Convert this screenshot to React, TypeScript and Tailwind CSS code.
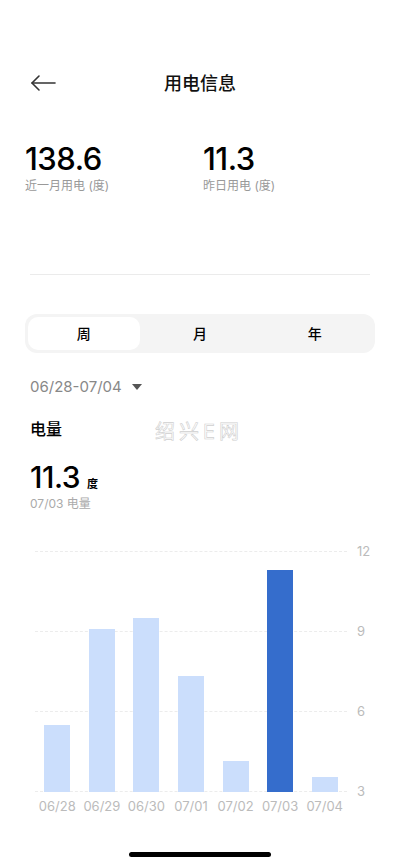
const bars = [
  { day: '06/28', value: 5.5 },
  { day: '06/29', value: 9.1 },
  { day: '06/30', value: 9.5 },
  { day: '07/01', value: 7.35 },
  { day: '07/02', value: 4.15 },
  { day: '07/03', value: 11.3, active: true },
  { day: '07/04', value: 3.55 },
]

const ticks = ['12', '9', '6', '3']

const BackArrow = () => (
  <svg width="26" height="18" viewBox="0 0 26 18" fill="none" stroke="#333" strokeWidth="1.6" strokeLinecap="round" strokeLinejoin="round">
    <path d="M25 9H2" />
    <path d="M9 2L2 9l7 7" />
  </svg>
)

const App = () => {
  return (
    <div className="w-[400px] h-[866px] bg-white flex flex-col font-['Inter','Noto_Sans_CJK_SC',sans-serif] text-black overflow-hidden">
      <header className="relative h-[44px] mt-[61px] flex items-center justify-center">
        <div className="absolute left-[30px] top-[13px]">
          <BackArrow />
        </div>
        <h1 className="text-[18px] font-medium text-[#111]">用电信息</h1>
      </header>

      <section className="flex px-[25px] mt-[37px]">
        <div className="w-[178px]">
          <p className="text-[31px] leading-[34px] font-medium tracking-[-0.5px]">138.6</p>
          <p className="text-[12px] text-[#999] mt-[1px]">近一月用电 (度)</p>
        </div>
        <div>
          <p className="text-[31px] leading-[34px] font-medium tracking-[-0.5px]">11.3</p>
          <p className="text-[12px] text-[#999] mt-[1px]">昨日用电 (度)</p>
        </div>
      </section>

      <div className="mx-[30px] mt-[79px] h-px bg-[#ebebeb]" />

      <div className="mx-[25px] mt-[39px] h-[39px] rounded-[12px] bg-[#f4f4f4] p-[3px] grid grid-cols-3">
        <div className="rounded-[10px] bg-white flex items-center justify-center text-[14px] font-medium mr-[3px]">周</div>
        <div className="flex items-center justify-center text-[14px] font-medium">月</div>
        <div className="flex items-center justify-center text-[14px] font-medium">年</div>
      </div>

      <div className="flex items-center gap-[10px] px-[30px] mt-[23px]">
        <span className="text-[15px] text-[#888]">06/28-07/04</span>
        <svg width="10" height="7" viewBox="0 0 10 7"><path d="M0 0h10L5 6z" fill="#555" /></svg>
      </div>

      <div className="flex items-center px-[30px] mt-[12px]">
        <span className="text-[16px] font-medium w-[125px]">电量</span>
        <span className="text-[20px] tracking-[4px] text-white [-webkit-text-stroke:0.6px_#cfcfcf] mt-[6px]">绍兴E网</span>
      </div>

      <div className="flex items-baseline px-[30px] mt-[14px]">
        <span className="text-[30px] leading-[32px] font-medium tracking-[-0.5px]">11.3</span>
        <span className="text-[11px] font-bold ml-[7px]">度</span>
      </div>
      <p className="px-[30px] text-[12px] text-[#aaa] mt-[2px]">07/03 电量</p>

      <div className="flex mt-[38px] pl-[35px]">
        <div className="w-[312px]">
          <div className="relative h-[241px]">
            <div className="absolute inset-0 flex flex-col justify-between">
              {ticks.map((t) => (
                <div key={`grid-${t}`} className="border-t border-dashed border-[#ececec]" />
              ))}
            </div>
            <div className="relative h-full grid grid-cols-7 items-end">
              {bars.map((bar) => (
                <div key={`bar-${bar.day}`} className="flex justify-center">
                  <div
                    className={bar.active ? 'w-[26px] bg-[#356dcc]' : 'w-[26px] bg-[#cbdefc]'}
                    style={{ height: `${((bar.value - 3) / 9) * 240}px` }}
                  />
                </div>
              ))}
            </div>
          </div>
          <div className="grid grid-cols-7 mt-[5px]">
            {bars.map((bar) => (
              <span key={`label-${bar.day}`} className="text-center text-[13px] text-[#bbb]">{bar.day}</span>
            ))}
          </div>
        </div>
        <div className="h-[259px] flex flex-col justify-between ml-[10px] -mt-[9px]">
          {ticks.map((t) => (
            <span key={`tick-${t}`} className="text-[13px] leading-[18px] text-[#bbb]">{t}</span>
          ))}
        </div>
      </div>

      <div className="mt-auto mb-[9px] mx-auto w-[142px] h-[5px] rounded-full bg-black" />
    </div>
  )
}

export default App
